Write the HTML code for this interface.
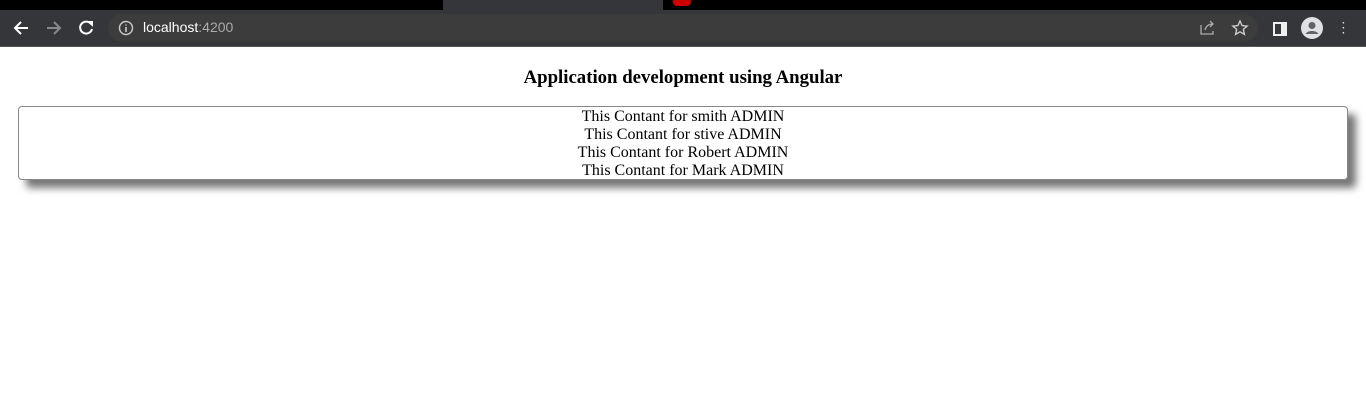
<!DOCTYPE html>
<html><head><style>
body{margin:0;width:1366px;height:410px;background:#fff;overflow:hidden;font-family:"Liberation Serif",serif;position:relative}
.tabs{position:absolute;top:0;left:0;width:1366px;height:10px;background:#000}
.tab{position:absolute;top:0;height:10px;background:#35363a;left:443px;width:220px}
.bar{position:absolute;top:10px;left:0;width:1366px;height:36px;background:#35363a;border-bottom:1px solid #555}
.omni{position:absolute;left:108px;top:4px;width:1150px;height:28px;border-radius:14px;background:#3c3c3c}
.url{position:absolute;left:143px;top:19px;font:14px "Liberation Sans",sans-serif;color:#fff}
.url span{color:#aaa}
h1{position:absolute;top:67px;left:0;width:1366px;text-align:center;margin:0;font-size:18.8px;font-weight:bold}
.box{position:absolute;left:18px;top:106px;width:1328px;height:71px;padding-top:1px;border:1px solid #888;border-radius:4px;box-shadow:8px 8px 8px #777;text-align:center;font-size:16px;line-height:18px}
</style></head><body>
<div class="tabs"><div class="tab"></div><div style="position:absolute;left:673px;top:0;width:18px;height:6px;background:#c00;border-radius:0 0 4px 4px"></div></div>
<div class="bar"><div class="omni"></div>
<svg style="position:absolute;left:12px;top:9px" width="18" height="18" viewBox="0 0 18 18"><path d="M16 9H3M9 3L3 9l6 6" stroke="#fff" stroke-width="2" fill="none"/></svg>
<svg style="position:absolute;left:45px;top:9px" width="18" height="18" viewBox="0 0 18 18"><path d="M2 9h13M9 3l6 6-6 6" stroke="#888" stroke-width="2" fill="none"/></svg>
<svg style="position:absolute;left:77px;top:9px" width="18" height="18" viewBox="0 0 18 18"><path d="M14 5A6 6 0 1 0 15 10" stroke="#fff" stroke-width="2" fill="none"/><path d="M10 2h6v6z" fill="#fff"/></svg>
<svg style="position:absolute;left:118px;top:10px" width="16" height="16" viewBox="0 0 16 16"><circle cx="8" cy="8" r="6.5" stroke="#ccc" stroke-width="1.4" fill="none"/><path d="M8 7v5M8 4.5v1" stroke="#ccc" stroke-width="1.6"/></svg>
<svg style="position:absolute;left:1199px;top:10px" width="18" height="16" viewBox="0 0 18 16"><path d="M2 5v9h12v-3M6 10c1-4 4-6 8-6M11 1l3 3-3 3" stroke="#aaa" stroke-width="1.3" fill="none"/></svg>
<svg style="position:absolute;left:1231px;top:9px" width="18" height="18" viewBox="0 0 18 18"><path d="M9 2l2.1 4.6 5 .5-3.8 3.3 1.1 4.9L9 12.8 4.6 15.3l1.1-4.9L1.9 7.1l5-.5z" stroke="#ccc" stroke-width="1.4" fill="none"/></svg>
<div style="position:absolute;left:1273px;top:12px;width:10px;height:10px;border:2px solid #eee;background:linear-gradient(90deg,transparent 60%,#eee 60%)"></div>
<svg style="position:absolute;left:1301px;top:7px" width="22" height="22" viewBox="0 0 22 22"><circle cx="11" cy="11" r="11" fill="#dfe1e5"/><circle cx="11" cy="8.5" r="3.5" fill="#5f6368"/><path d="M4.5 17c2-4 11-4 13 0z" fill="#5f6368"/></svg>
<div style="position:absolute;left:1342px;top:11px;width:4px;color:#ddd;font:bold 10px/5px sans-serif">·<br>·<br>·</div>
</div>
<div class="url">localhost<span>:4200</span></div>
<h1>Application development using Angular</h1>
<div class="box">This Contant for smith ADMIN<br>This Contant for stive ADMIN<br>This Contant for Robert ADMIN<br>This Contant for Mark ADMIN</div>
</body></html>
